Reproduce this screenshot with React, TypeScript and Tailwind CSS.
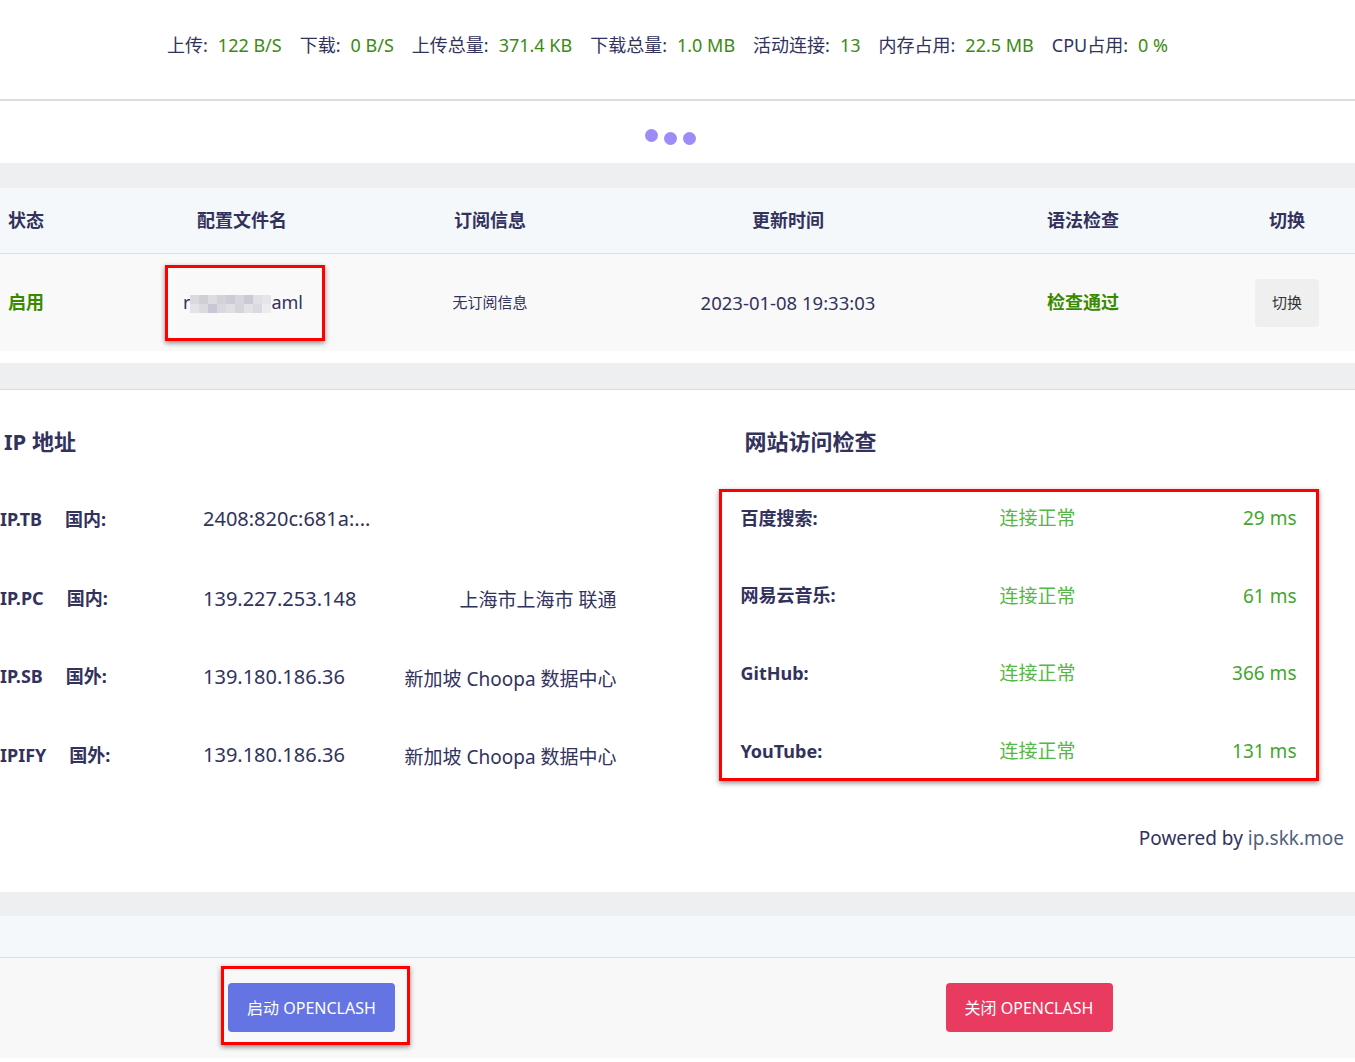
const stats = [
  ['上传:', '122 B/S'],
  ['下载:', '0 B/S'],
  ['上传总量:', '371.4 KB'],
  ['下载总量:', '1.0 MB'],
  ['活动连接:', '13'],
  ['内存占用:', '22.5 MB'],
  ['CPU占用:', '0 %'],
];

const ipRows = [
  ['IP.TB', '国内:', '2408:820c:681a:...', ''],
  ['IP.PC', '国内:', '139.227.253.148', '上海市上海市 联通'],
  ['IP.SB', '国外:', '139.180.186.36', '新加坡 Choopa 数据中心'],
  ['IPIFY', '国外:', '139.180.186.36', '新加坡 Choopa 数据中心'],
];

const sites = [
  ['百度搜索:', '29 ms'],
  ['网易云音乐:', '61 ms'],
  ['GitHub:', '366 ms'],
  ['YouTube:', '131 ms'],
];

// mosaic over the config file name
const blur = [
  '#d9d9df', '#cfcfd6', '#dcdce2', '#d2d2d9', '#cdccd6', '#d6d6dc', '#cbcad4', '#e0e0e5', '#e6e6ea',
  '#e3e3e8', '#dadae0', '#c9c7d3', '#d8d8de', '#dedee3', '#d4d4da', '#e2e2e6', '#d9d9df', '#ececef',
];

const App = () => {
  return (
    <div className="min-h-[1062px] bg-white font-['Noto_Sans','Noto_Sans_CJK_SC',sans-serif] text-[#32325d]">
      {/* status bar */}
      <div className="h-[101px] border-b-2 border-[#dddddd] pt-[33px]">
        <div className="flex justify-center gap-[18px] pr-[20px] text-[18px] leading-[24px]">
          {stats.map(([k, v]) => (
            <div key={k} className="flex gap-[10px]">
              <span>{k}</span>
              <span className="text-[#3c8a12]">{v}</span>
            </div>
          ))}
        </div>
      </div>

      {/* loading dots */}
      <div className="flex h-[62px] justify-center gap-[6px] pt-[28px] pr-[15px]">
        <span className="h-[13px] w-[13px] rounded-full bg-[#9d8cf8]" />
        <span className="mt-[3px] h-[13px] w-[13px] rounded-full bg-[#9d8cf8]" />
        <span className="mt-[3px] h-[13px] w-[13px] rounded-full bg-[#9d8cf8]" />
      </div>

      <div className="h-[25px] bg-[#eeeff1]" />

      {/* config table */}
      <div className="grid h-[66px] grid-cols-[52px_380px_116px_480px_110px_1fr] items-center border-b border-[#dedede] bg-[#f5f8fb] text-[18px] font-bold">
        <div className="text-center">状态</div>
        <div className="text-center">配置文件名</div>
        <div className="text-center">订阅信息</div>
        <div className="text-center">更新时间</div>
        <div className="text-center">语法检查</div>
        <div className="flex justify-end pr-[36px]">
          <span className="w-[64px] text-center">切换</span>
        </div>
      </div>
      <div className="grid h-[97px] grid-cols-[52px_380px_116px_480px_110px_1fr] items-center bg-[#f9f9f9] text-[18px]">
        <div className="text-center font-bold text-[#3a8a00]">启用</div>
        <div className="flex justify-center pl-[6px]">
          <div className="flex h-[76px] w-[160px] items-center border-[3px] border-[#ff0000] pl-[15px] shadow-[0_2px_5px_rgba(0,0,0,0.45)]">
            <span>r</span>
            <div className="grid grid-cols-[repeat(9,9px)] pt-[2px]">
              {blur.map((c, i) => (
                <span key={i} className="h-[9px] w-[9px]" style={{ backgroundColor: c }} />
              ))}
            </div>
            <span>aml</span>
          </div>
        </div>
        <div className="text-center text-[15px]">无订阅信息</div>
        <div className="text-center text-[18.5px]">2023-01-08 19:33:03</div>
        <div className="text-center font-bold text-[#3a8a00]">检查通过</div>
        <div className="flex justify-end pr-[36px]">
          <button className="h-[48px] w-[64px] rounded-[4px] bg-[#efefef] text-[15px] text-[#333]">切换</button>
        </div>
      </div>
      <div className="h-[12px]" />
      <div className="h-[27px] border-b border-[#dddddd] bg-[#eeeff1]" />

      {/* ip + site check */}
      <div className="pt-[37px] pb-[42px]">
        <div className="grid grid-cols-2">
          <div>
            <h3 className="pl-[4px] text-[22px] leading-[28px] font-bold">IP 地址</h3>
            <div className="mt-[49px] flex flex-col gap-[54.3px] pr-[61px]">
              {ipRows.map(([src, area, ip, loc]) => (
                <div key={src} className="grid h-[24px] grid-cols-[203px_1fr] items-center">
                  <div className="flex gap-[23px] text-[18px] font-bold">
                    <span>{src}</span>
                    <span>{area}</span>
                  </div>
                  <div className="flex items-center justify-between text-[20px]">
                    <span>{ip}</span>
                    <span className="mt-[4px] text-[19px]">{loc}</span>
                  </div>
                </div>
              ))}
            </div>
          </div>
          <div className="pl-[41px]">
            <h3 className="pl-[26px] text-[22px] leading-[28px] font-bold">网站访问检查</h3>
            <div className="mt-[34px] w-[600px] border-[3px] border-[#ff0000] px-[19px] pt-[12px] pb-[17px] shadow-[0_2px_5px_rgba(0,0,0,0.45)]">
              <div className="flex flex-col gap-[53.7px]">
                {sites.map(([name, ms]) => (
                  <div key={name} className="grid h-[24px] grid-cols-[259px_1fr_auto] items-center">
                    <span className="text-[18px] font-bold">{name}</span>
                    <span className="text-[19px] text-[#55b747]">连接正常</span>
                    <span className="text-[19px] text-[#45a52e]">{ms}</span>
                  </div>
                ))}
              </div>
            </div>
          </div>
        </div>
        <div className="mt-[45px] flex justify-end pr-[11px] text-[19px] leading-[24px]">
          <span>Powered by</span>
          <span className="ml-[5px] text-[#525f7f]">ip.skk.moe</span>
        </div>
      </div>

      <div className="h-[24px] bg-[#eeeff1]" />
      <div className="h-[42px] border-b border-[#dddddd] bg-[#f5f8fb]" />

      {/* actions */}
      <div className="grid h-[100px] grid-cols-2 bg-[#f8f8f8]">
        <div className="pt-[8px] pl-[221px]">
          <div className="inline-block border-[3px] border-[#ff0000] pt-[14px] pr-[12px] pb-[10px] pl-[4px] shadow-[0_2px_5px_rgba(0,0,0,0.45)]">
            <button className="h-[49px] w-[167px] rounded-[4px] bg-[#6574e3] text-[16px] text-white">启动 OPENCLASH</button>
          </div>
        </div>
        <div className="pt-[25px] pl-[268px]">
          <button className="h-[49px] w-[167px] rounded-[4px] bg-[#e93b60] text-[16px] text-white">关闭 OPENCLASH</button>
        </div>
      </div>
    </div>
  );
};

export default App;
